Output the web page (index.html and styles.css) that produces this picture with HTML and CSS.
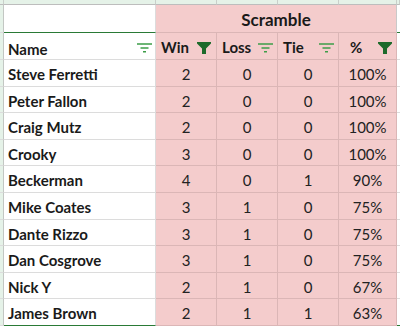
FILE: index.html
```html
<!DOCTYPE html>
<html>
<head>
<meta charset="utf-8">
<link rel="stylesheet" href="styles.css">
</head>
<body>
<div class="sheet">
  <div class="ch"></div><div class="ch"></div><div class="ch"></div><div class="ch"></div><div class="ch"></div><div class="ch"></div><div class="ch"></div>

  <div class="rh"></div>
  <div class="cell top-line"></div>
  <div class="cell pink top-line title">Scramble</div>
  <div class="cell rest top-line"></div>

  <div class="rh"></div>
  <div class="cell head head-name"><span>Name</span><svg class="flt" viewBox="0 0 15 10"><path d="M0 1H15M3.5 5H11.5M6 8.8H9" /></svg></div>
  <div class="cell pink head"><span>Win</span><svg class="fun" viewBox="0 0 14 12"><path d="M0 0H14V1.6L9 6.6V12H5V6.6L0 1.6Z"/></svg></div>
  <div class="cell pink head"><span>Loss</span><svg class="flt" viewBox="0 0 15 10"><path d="M0 1H15M3.5 5H11.5M6 8.8H9" /></svg></div>
  <div class="cell pink head"><span>Tie</span><svg class="flt" viewBox="0 0 15 10"><path d="M0 1H15M3.5 5H11.5M6 8.8H9" /></svg></div>
  <div class="cell pink head head-pct"><span>%</span><svg class="fun" viewBox="0 0 14 12"><path d="M0 0H14V1.6L9 6.6V12H5V6.6L0 1.6Z"/></svg></div>
  <div class="cell rest"></div>

  <div class="rh"></div><div class="cell name">Steve Ferretti</div><div class="cell pink num">2</div><div class="cell pink num">0</div><div class="cell pink num">0</div><div class="cell pink num">100%</div><div class="cell rest"></div>
  <div class="rh"></div><div class="cell name">Peter Fallon</div><div class="cell pink num">2</div><div class="cell pink num">0</div><div class="cell pink num">0</div><div class="cell pink num">100%</div><div class="cell rest"></div>
  <div class="rh"></div><div class="cell name">Craig Mutz</div><div class="cell pink num">2</div><div class="cell pink num">0</div><div class="cell pink num">0</div><div class="cell pink num">100%</div><div class="cell rest"></div>
  <div class="rh"></div><div class="cell name">Crooky</div><div class="cell pink num">3</div><div class="cell pink num">0</div><div class="cell pink num">0</div><div class="cell pink num">100%</div><div class="cell rest"></div>
  <div class="rh"></div><div class="cell name">Beckerman</div><div class="cell pink num">4</div><div class="cell pink num">0</div><div class="cell pink num">1</div><div class="cell pink num">90%</div><div class="cell rest"></div>
  <div class="rh"></div><div class="cell name">Mike Coates</div><div class="cell pink num">3</div><div class="cell pink num">1</div><div class="cell pink num">0</div><div class="cell pink num">75%</div><div class="cell rest"></div>
  <div class="rh"></div><div class="cell name">Dante Rizzo</div><div class="cell pink num">3</div><div class="cell pink num">1</div><div class="cell pink num">0</div><div class="cell pink num">75%</div><div class="cell rest"></div>
  <div class="rh"></div><div class="cell name">Dan Cosgrove</div><div class="cell pink num">3</div><div class="cell pink num">1</div><div class="cell pink num">0</div><div class="cell pink num">75%</div><div class="cell rest"></div>
  <div class="rh"></div><div class="cell name">Nick Y</div><div class="cell pink num">2</div><div class="cell pink num">1</div><div class="cell pink num">0</div><div class="cell pink num">67%</div><div class="cell rest"></div>
  <div class="rh"></div><div class="cell name last">James Brown</div><div class="cell pink num last">2</div><div class="cell pink num last">1</div><div class="cell pink num last">1</div><div class="cell pink num last">63%</div><div class="cell rest last"></div>
</div>
</body>
</html>
```

FILE: styles.css
```css
html, body {
  margin: 0;
  padding: 0;
  background: #ffffff;
}

.sheet {
  display: grid;
  grid-template-columns: 4px 152px 61px 61px 61px 58px 3px;
  grid-template-rows: 5px 28px 27px repeat(10, 26.6px);
  width: 400px;
  font-family: Lato, "Open Sans", sans-serif;
  font-size: 15px;
  color: #1a1a1a;
}

.sheet > div {
  box-sizing: border-box;
  border-right: 1px solid #dcdcdc;
  border-bottom: 1px solid #dcdcdc;
}

.ch {
  background: #e5f2e8;
  border-right-color: #c9cfca !important;
  border-bottom-color: #bdbdbd !important;
}

.rh {
  background: #e5f2e8;
  border-right-color: #c3c7c3 !important;
}

.cell {
  background: #ffffff;
}

.pink {
  background: #f4cccc;
  border-right-color: #dbb6b6 !important;
  border-bottom-color: #dbb6b6 !important;
}

.rest {
  border-right: none !important;
  background: #ffffff;
}

.sheet > .top-line,
.sheet > .last {
  border-bottom: 1px solid #2a7a36;
}

.title {
  grid-column: span 4;
  text-align: center;
  font-weight: 700;
  font-size: 17px;
  padding-top: 4px;
  border-right-color: #c9c9c9 !important;
}

.head {
  display: flex;
  align-items: flex-start;
  justify-content: space-between;
  font-weight: 700;
  padding: 5px 4px 0 5px;
}

.head-name {
  padding: 7px 3px 0 4px;
}

.head-pct {
  padding-left: 11px;
  padding-right: 3px;
}

.flt {
  width: 15px;
  height: 10px;
  margin-top: 5px;
  fill: none;
  stroke: #3c9d48;
  stroke-width: 1.6;
}

.head-name .flt {
  margin-top: 3px;
}

.fun {
  width: 14px;
  height: 12px;
  margin-top: 4px;
  margin-right: 1px;
  fill: #1d6a2b;
}

.name {
  font-weight: 700;
  padding: 5px 0 0 4px;
  white-space: nowrap;
}

.num {
  text-align: center;
  padding-top: 5px;
  color: #222222;
}
```
